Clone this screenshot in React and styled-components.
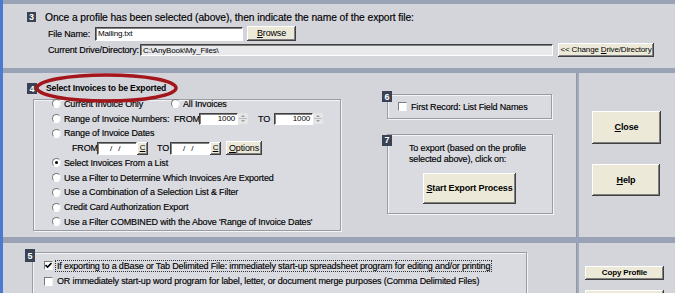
import React from 'react';
import styled, { createGlobalStyle } from 'styled-components';

const Global = createGlobalStyle`
  html, body { margin: 0; padding: 0; background: #d4d5db; }
  body {
    font-family: "Liberation Sans", Arial, sans-serif;
    font-size: 9px;
    letter-spacing: -0.15px;
    color: #000;
    -webkit-text-stroke: 0.15px #000;
  }
  #root { width: 675px; height: 293px; overflow: hidden; }
`;

const Page = styled.div`
  width: 675px;
  height: 293px;
  box-sizing: border-box;
  border-left: 3px solid #4a7bd0;
  background: #d4d5db;
  display: flex;
  flex-direction: column;
  overflow: hidden;
`;

const HBar = styled.div`
  flex: none;
  height: ${(p) => p.$h}px;
  background: #9aa3b6;
`;

const Section3 = styled.div`
  flex: none;
  height: 64px;
  box-sizing: border-box;
  padding: 8px 0 0 24px;
  display: flex;
  flex-direction: column;
`;

const HeadRow = styled.div`
  display: flex;
  align-items: center;
  gap: 9px;
  height: 10px;
  font-size: 10.3px;
  letter-spacing: -0.1px;
`;

const Badge = styled.div`
  width: ${(p) => p.$w || 10}px;
  height: ${(p) => p.$h || 11}px;
  background: #394353;
  color: #fff;
  -webkit-text-stroke: 0;
  font-weight: bold;
  font-size: 9px;
  display: flex;
  align-items: center;
  justify-content: center;
  flex: none;
  ${(p) => (p.$float ? `position: absolute; left: ${p.$x}px; top: ${p.$y}px; z-index: 1;` : '')}
`;

const FieldRow = styled.div`
  display: flex;
  align-items: center;
  padding-left: 21px;
  margin-top: ${(p) => p.$mt}px;
  height: ${(p) => p.$h}px;
`;

const Label = styled.span`
  flex: none;
  width: ${(p) => (p.$w ? `${p.$w}px` : 'auto')};
  white-space: nowrap;
  margin-left: ${(p) => p.$ml || 0}px;
`;

const TextInput = styled.div`
  box-sizing: border-box;
  width: ${(p) => p.$w}px;
  height: ${(p) => p.$h}px;
  background: ${(p) => p.$bg || '#fff'};
  border: 1px solid;
  border-color: #404040 #ffffff #ffffff #404040;
  box-shadow: inset 1px 1px 0 #808080;
  font-size: 8px;
  -webkit-text-stroke: 0;
  padding: 0 ${(p) => (p.$right ? 2 : 0)}px 0 ${(p) => p.$pl ?? 2}px;
  display: flex;
  align-items: center;
  justify-content: ${(p) => (p.$right ? 'flex-end' : 'flex-start')};
  white-space: pre;
  flex: none;
  margin-left: ${(p) => p.$ml || 0}px;
`;

const Button = styled.div`
  box-sizing: border-box;
  width: ${(p) => p.$w}px;
  height: ${(p) => p.$h}px;
  margin-left: ${(p) => p.$ml || 0}px;
  margin-top: ${(p) => p.$mt || 0}px;
  background: #ece9d8;
  box-shadow: inset -1px -1px 0 #404040, inset 1px 1px 0 #ffffff, inset -2px -2px 0 #808080;
  display: flex;
  align-items: center;
  justify-content: center;
  font-size: ${(p) => p.$fs || 9}px;
  font-weight: ${(p) => (p.$bold ? 'bold' : 'normal')};
  -webkit-text-stroke: 0;
  white-space: nowrap;
  flex: none;
  padding-bottom: 1px;
  u { text-decoration: underline; }
`;

const MidRow = styled.div`
  flex: none;
  height: 164px;
  display: flex;
`;

const BotRow = styled.div`
  flex: 1;
  display: flex;
  min-height: 0;
`;

const LeftPane = styled.div`
  width: 573px;
  flex: none;
  display: flex;
  align-items: flex-start;
  box-sizing: border-box;
  padding: ${(p) => p.$pad};
`;

const VDivider = styled.div`
  width: 3px;
  flex: none;
  background: #a3aab9;
  border-left: 1px solid #8f97a9;
  box-sizing: border-box;
`;

const RightPane = styled.div`
  flex: 1;
  display: flex;
  flex-direction: column;
  box-sizing: border-box;
  padding: ${(p) => p.$pad};
`;

const Etched = styled.div`
  position: relative;
  box-sizing: border-box;
  width: ${(p) => p.$w}px;
  height: ${(p) => p.$h}px;
  margin-left: ${(p) => p.$ml || 0}px;
  margin-top: ${(p) => p.$mt || 0}px;
  border: 1px solid #9a9ca4;
  box-shadow: inset 1px 1px 0 #f4f4f6, 1px 1px 0 #f4f4f6;
  background: #dadbe0;
  flex: none;
`;

const Group4 = styled(Etched)`
  padding: 0 0 0 18px;
`;

const RowList = styled.div`
  margin-top: -3.5px;
`;

const Legend = styled.div`
  position: absolute;
  left: 12px;
  top: -17.5px;
  font-weight: bold;
  font-size: 8.6px;
  -webkit-text-stroke: 0;
  line-height: 11px;
  white-space: nowrap;
`;

const Ellipse = styled.svg`
  position: absolute;
  left: 1px;
  top: -27px;
  z-index: 2;
  overflow: visible;
`;

const ORow = styled.div`
  display: flex;
  align-items: center;
  height: 14.75px;
  padding-left: ${(p) => p.$indent || 0}px;
`;

const RadioItem = styled.div`
  display: flex;
  align-items: center;
  width: ${(p) => (p.$w ? `${p.$w}px` : 'auto')};
  flex: none;
  white-space: nowrap;
`;

const Circle = styled.span`
  width: 9px;
  height: 9px;
  box-sizing: border-box;
  border-radius: 50%;
  border: 1px solid;
  border-color: #7c7c7c #e8e8e8 #ffffff #7c7c7c;
  background: #fff;
  margin-right: 3px;
  flex: none;
  position: relative;
  &::after {
    content: '';
    display: ${(p) => (p.$on ? 'block' : 'none')};
    position: absolute;
    left: 2px;
    top: 2px;
    width: 3px;
    height: 3px;
    border-radius: 50%;
    background: #000;
  }
`;

const Check = styled.span`
  width: 9px;
  height: 9px;
  box-sizing: border-box;
  border: 1px solid;
  border-color: #7c7c7c #f0f0f0 #ffffff #7c7c7c;
  background: #fff;
  flex: none;
  margin-right: ${(p) => p.$mr}px;
  display: flex;
  align-items: center;
  justify-content: center;
`;

const Spin = styled.svg`
  flex: none;
  background: #e6e6e6;
`;

const BoxCol = styled.div`
  display: flex;
  flex-direction: column;
  margin-left: 46px;
  margin-top: 7px;
`;

const Box6 = styled(Etched)`
  display: flex;
  align-items: center;
  padding-left: 10px;
`;

const Box7 = styled(Etched)`
  padding: 8px 0 0 21px;
  line-height: 11px;
`;

const Group5 = styled(Etched)`
  padding: 5px 0 0 11px;
`;

const CRow = styled.div`
  display: flex;
  align-items: center;
  height: 15.5px;
`;

const Focus = styled.span`
  border: 1px dotted #333;
  padding: 0 1px;
  width: ${(p) => p.$w}px;
  box-sizing: border-box;
  height: 12px;
  line-height: 10px;
  white-space: nowrap;
`;

const SpinIcon = () => (
  <Spin width="10" height="11" viewBox="0 0 10 11">
    <path d="M3 4 L5 2 L7 4 Z" fill="#9a9a9a" />
    <line x1="1" y1="5.5" x2="9" y2="5.5" stroke="#bdbdbd" />
    <path d="M3 7 L5 9 L7 7 Z" fill="#9a9a9a" />
  </Spin>
);

const CheckMark = () => (
  <svg width="7" height="7" viewBox="0 0 7 7">
    <path d="M0.5 3 L2.5 5 L6.5 1" stroke="#000" strokeWidth="1.6" fill="none" />
  </svg>
);

const Radio = ({ on, w, children }) => (
  <RadioItem $w={w}>
    <Circle $on={on} />
    <span>{children}</span>
  </RadioItem>
);

export default function App() {
  return (
    <>
      <Global />
      <Page>
        <HBar $h={4} />
        <Section3>
          <HeadRow>
            <Badge $w={9} $h={10}>3</Badge>
            <span>Once a profile has been selected (above), then indicate the name of the export file:</span>
          </HeadRow>
          <FieldRow $mt={4} $h={15}>
            <Label $w={47}>File Name:</Label>
            <TextInput $w={148} $h={14}>Mailing.txt</TextInput>
            <Button $w={49} $h={15} $ml={4}><span><u>B</u>rowse</span></Button>
          </FieldRow>
          <FieldRow $mt={2} $h={14}>
            <Label $w={92}>Current Drive/Directory:</Label>
            <TextInput $w={413} $h={12} $bg="#e9e9ec">C:\AnyBook\My_Files\</TextInput>
            <Button $w={96} $h={14} $ml={5} $fs={8}><span>&lt;&lt; Change <u>D</u>rive/Directory</span></Button>
          </FieldRow>
        </Section3>
        <HBar $h={5} />
        <MidRow>
          <LeftPane $pad="14px 0 0 30px">
            <Group4 $w={308} $h={132} $mt={12}>
              <Badge $float $x={-7} $y={-17}>4</Badge>
              <Legend>Select Invoices to be Exported</Legend>
              <Ellipse width="143" height="30" viewBox="0 0 143 30">
                <ellipse cx="71.5" cy="15" rx="69.5" ry="13" fill="none" stroke="#a3161c" strokeWidth="3.5" />
              </Ellipse>
              <RowList>
                <ORow>
                  <Radio w={119}>Current Invoice Only</Radio>
                  <Radio>All Invoices</Radio>
                </ORow>
                <ORow>
                  <Radio w={122}>Range of Invoice Numbers:</Radio>
                  <Label $w={25}>FROM</Label>
                  <TextInput $w={39} $h={12} $right>1000</TextInput>
                  <SpinIcon />
                  <Label $w={16} $ml={10}>TO</Label>
                  <TextInput $w={39} $h={12} $right>1000</TextInput>
                  <SpinIcon />
                </ORow>
                <ORow>
                  <Radio>Range of Invoice Dates</Radio>
                </ORow>
                <ORow $indent={20}>
                  <Label $w={25}>FROM</Label>
                  <TextInput $w={40} $h={13} $pl={10}>{' /   /'}</TextInput>
                  <Button $w={11} $h={13} $fs={8}><u>C</u></Button>
                  <Label $w={13} $ml={9}>TO</Label>
                  <TextInput $w={40} $h={13} $pl={10}>{' /   /'}</TextInput>
                  <Button $w={11} $h={13} $fs={8}><u>C</u></Button>
                  <Button $w={36} $h={14} $ml={5}><span><u>O</u>ptions</span></Button>
                </ORow>
                <ORow>
                  <Radio on>Select Invoices From a List</Radio>
                </ORow>
                <ORow>
                  <Radio>Use a Filter to Determine Which Invoices Are Exported</Radio>
                </ORow>
                <ORow>
                  <Radio>Use a Combination of a Selection List &amp; Filter</Radio>
                </ORow>
                <ORow>
                  <Radio>Credit Card Authorization Export</Radio>
                </ORow>
                <ORow>
                  <Radio>Use a Filter COMBINED with the Above 'Range of Invoice Dates'</Radio>
                </ORow>
              </RowList>
            </Group4>
            <BoxCol>
              <Box6 $w={165} $h={25}>
                <Badge $float $x={-6} $y={-4}>6</Badge>
                <Check $mr={4} />
                <span>First Record: List Field Names</span>
              </Box6>
              <Box7 $w={166} $h={80} $mt={15}>
                <Badge $float $x={-6} $y={0}>7</Badge>
                <div>To export (based on the profile</div>
                <div>selected above), click on:</div>
                <Button $w={93} $h={31} $ml={14} $mt={8} $bold><span><u>S</u>tart Export Process</span></Button>
              </Box7>
            </BoxCol>
          </LeftPane>
          <VDivider />
          <RightPane $pad="38px 0 0 13px">
            <Button $w={69} $h={33} $bold><span><u>C</u>lose</span></Button>
            <Button $w={68} $h={32} $mt={20} $bold><span><u>H</u>elp</span></Button>
          </RightPane>
        </MidRow>
        <HBar $h={6} />
        <BotRow>
          <LeftPane $pad="9px 0 0 29px">
            <Group5 $w={495} $h={60}>
              <Badge $float $x={-8} $y={-4} $h={13}>5</Badge>
              <CRow>
                <Check $mr={2}><CheckMark /></Check>
                <Focus $w={437}>If exporting to a dBase or Tab Delimited File: immediately start-up spreadsheet program for editing and/or printing</Focus>
              </CRow>
              <CRow>
                <Check $mr={4} />
                <span>OR immediately start-up word program for label, letter, or document merge purposes (Comma Delimited Files)</span>
              </CRow>
            </Group5>
          </LeftPane>
          <VDivider />
          <RightPane $pad="23px 0 0 6px">
            <Button $w={79} $h={14} $bold $fs={8}>Copy Profile</Button>
            <Button $w={79} $h={14} $mt={10} $bold />
          </RightPane>
        </BotRow>
      </Page>
    </>
  );
}
